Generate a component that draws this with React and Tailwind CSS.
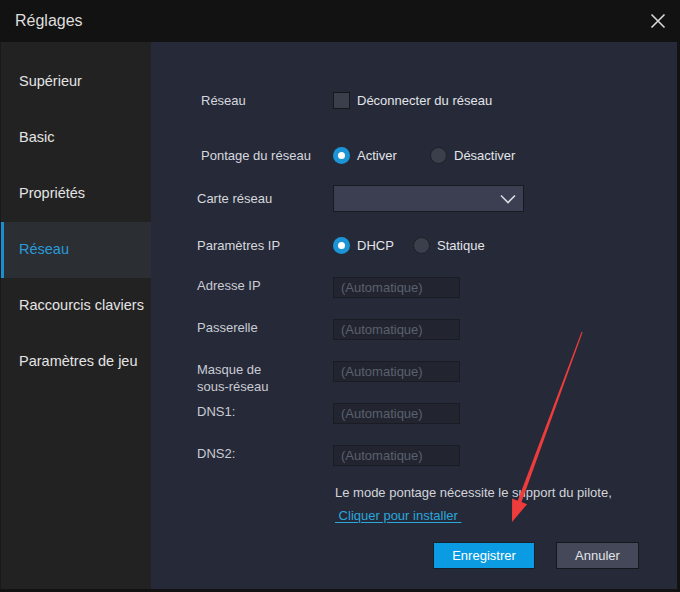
import { useState } from "react";

const menu = [
  "Supérieur",
  "Basic",
  "Propriétés",
  "Réseau",
  "Raccourcis claviers",
  "Paramètres de jeu",
];

const Radio = ({ checked, label, onClick, width }) => (
  <button className={`flex items-center gap-[7px] ${width}`} onClick={onClick}>
    <span
      className={
        checked
          ? "flex h-[17px] w-[17px] items-center justify-center rounded-full bg-[#1b95d6]"
          : "h-[17px] w-[17px] rounded-full border border-[#1c1f27] bg-[#3b3e4b]"
      }
    >
      {checked && <span className="h-[7px] w-[7px] rounded-full bg-white" />}
    </span>
    <span className="text-[13px] text-[#e2e4ea]">{label}</span>
  </button>
);

const Field = ({ label, first }) => (
  <div className={`flex h-[21px] items-start ${first ? "mt-[23px]" : "mt-[21px]"}`}>
    <div className="w-[136px] whitespace-nowrap text-[13px] leading-[17px] text-[#c9ccd4]">{label}</div>
    <div className="flex h-[21px] w-[127px] items-center border border-[#1a1c23] bg-[#222530] px-[7px] text-[13px] text-[#5b606d]">
      (Automatique)
    </div>
  </div>
);

export default function App() {
  const [selected, setSelected] = useState(3);
  const [bridge, setBridge] = useState(true);
  const [dhcp, setDhcp] = useState(true);

  return (
    <div
      className="relative flex h-[592px] w-[680px] flex-col bg-[#121212]"
      style={{ fontFamily: '"Liberation Sans", Arial, sans-serif' }}
    >
      {/* titre */}
      <div className="flex h-[42px] items-center justify-between pl-[15px] pr-[14px]">
        <span className="text-[16px] text-[#dedede]">Réglages</span>
        <svg width="16" height="16" viewBox="0 0 16 16" className="text-[#d8d8d8]">
          <path d="M1.5 1.5 L14.5 14.5 M14.5 1.5 L1.5 14.5" stroke="currentColor" strokeWidth="1.6" />
        </svg>
      </div>

      <div className="flex flex-1 pb-[3px] pr-[3px]">
        {/* menu gauche */}
        <div className="w-[151px] border-l border-[#191919] bg-[#222222] pt-[12px]">
          {menu.map((item, i) => (
            <div
              key={item}
              onClick={() => setSelected(i)}
              className={`flex h-[56px] cursor-pointer items-center border-l-[3px] pl-[15px] text-[14.5px] ${
                selected === i
                  ? "border-[#1a8fd0] bg-[#2b2e33] text-[#2a9ad8]"
                  : "border-transparent text-[#e4e4e4]"
              }`}
            >
              {item}
            </div>
          ))}
        </div>

        {/* panneau */}
        <div className="flex-1 bg-[#262a38] pl-[46px] pt-[50px]">
          <div className="flex h-[17px] items-center">
            <div className="w-[136px] pl-[4px] text-[13px] text-[#d6d8de]">Réseau</div>
            <label className="flex items-center gap-[7px]">
              <span className="h-[17px] w-[17px] border border-[#15171d] bg-[#3b3e4b]" />
              <span className="text-[13px] text-[#e2e4ea]">Déconnecter du réseau</span>
            </label>
          </div>

          <div className="mt-[38px] flex h-[17px] items-center">
            <div className="w-[136px] pl-[4px] text-[13px] text-[#d6d8de]">Pontage du réseau</div>
            <div className="flex items-center">
              <Radio checked={bridge} label="Activer" width="w-[97px]" onClick={() => setBridge(true)} />
              <Radio checked={!bridge} label="Désactiver" onClick={() => setBridge(false)} />
            </div>
          </div>

          <div className="mt-[21px] flex h-[27px] items-center">
            <div className="w-[136px] text-[13px] text-[#d6d8de]">Carte réseau</div>
            <div className="flex h-[27px] w-[191px] items-center justify-end border border-[#181a21] bg-[#3b3f51] pr-[7px]">
              <svg width="16" height="10" viewBox="0 0 16 10">
                <path d="M1 1.5 L8 8.5 L15 1.5" fill="none" stroke="#d8dae2" strokeWidth="1.6" />
              </svg>
            </div>
          </div>

          <div className="mt-[25px] flex h-[17px] items-center">
            <div className="w-[136px] text-[13px] text-[#d6d8de]">Paramètres IP</div>
            <div className="flex items-center">
              <Radio checked={dhcp} label="DHCP" width="w-[80px]" onClick={() => setDhcp(true)} />
              <Radio checked={!dhcp} label="Statique" onClick={() => setDhcp(false)} />
            </div>
          </div>

          <Field label="Adresse IP" first />
          <Field label="Passerelle" />
          <Field
            label={
              <>
                Masque de
                <br />
                sous-réseau
              </>
            }
          />
          <Field label="DNS1:" />
          <Field label="DNS2:" />

          <div className="ml-[138px] mt-[18px] text-[13px] leading-[17px] text-[#d2d4da]">
            Le mode pontage nécessite le support du pilote,
          </div>
          <div className="ml-[138px] mt-[6px] text-[13px] leading-[17px]">
            <a className="text-[#2aa6dc] underline underline-offset-2">&nbsp;Cliquer pour installer&nbsp;</a>
          </div>

          <div className="mt-[18px] flex gap-[21px] pl-[236px]">
            <button className="h-[27px] w-[102px] border border-[#15202b] bg-[#0a9be3] text-[13px] text-white">
              Enregistrer
            </button>
            <button className="h-[27px] w-[83px] border border-[#15171d] bg-[#444858] text-[13px] text-[#e2e4ea]">
              Annuler
            </button>
          </div>
        </div>
      </div>

      {/* flèche rouge */}
      <svg
        className="pointer-events-none absolute left-0 top-0"
        width="680"
        height="592"
        viewBox="0 0 680 592"
      >
        <polygon
          points="581.6,331.8 582.6,332.2 521.5,502.1 527.1,504.2 512,522 512.1,498.6 517.7,500.7"
          fill="#ee3b3b"
        />
      </svg>
    </div>
  );
}
